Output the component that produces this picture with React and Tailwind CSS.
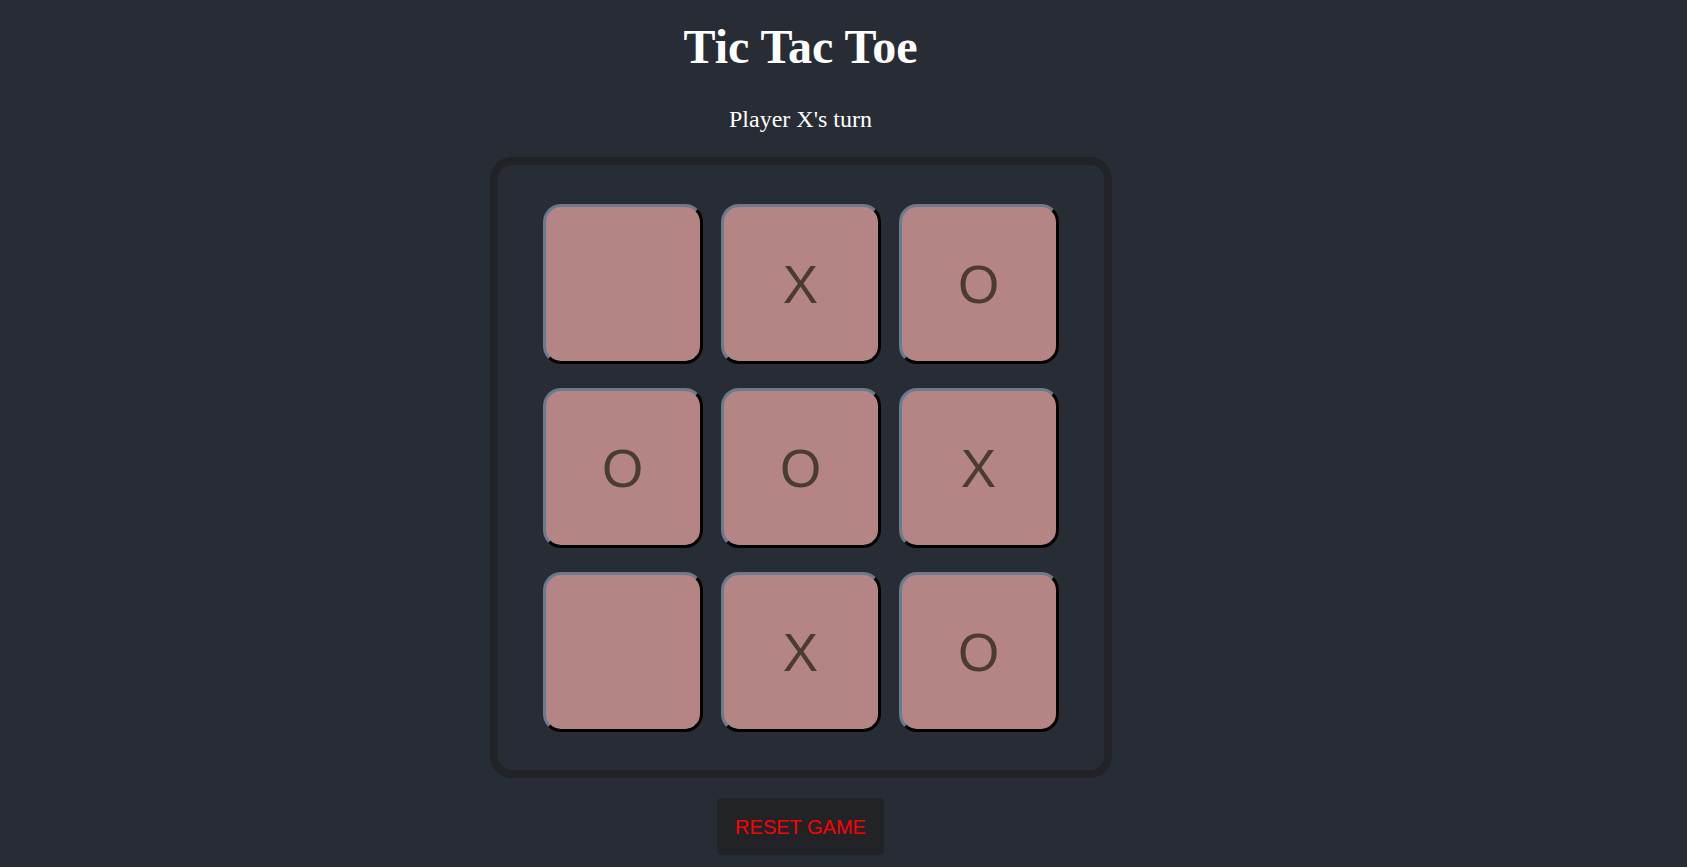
import { useState } from "react";

const START = [null, "X", "O", "O", "O", "X", null, "X", "O"];

function Cell({ value, onClick }) {
  return (
    <button
      onClick={onClick}
      className="flex h-[160px] w-[160px] items-center justify-center rounded-[18px] border-[3px] border-t-[#6b7b8c] border-l-[#6b7b8c] border-r-black border-b-black bg-[#b58585] font-['Liberation_Sans',Arial,sans-serif] text-[53px] leading-none text-[#4a3c31]"
    >
      {value}
    </button>
  );
}

export default function App() {
  const [squares, setSquares] = useState(START);
  const [xNext, setXNext] = useState(true);

  const play = (i) => {
    if (squares[i]) return;
    const next = squares.slice();
    next[i] = xNext ? "X" : "O";
    setSquares(next);
    setXNext(!xNext);
  };

  const reset = () => {
    setSquares(Array(9).fill(null));
    setXNext(true);
  };

  return (
    <div className="min-h-screen bg-[#282c34] pr-[86px] font-['Liberation_Serif','Times_New_Roman',serif] text-white">
      <div className="flex flex-col items-center pt-[19px]">
        <h1 className="text-[48px] font-bold leading-[55px]">Tic Tac Toe</h1>
        <p className="mt-[31px] text-[24px] leading-[28px]">
          Player {xNext ? "X" : "O"}'s turn
        </p>
        <div className="mt-[24px] rounded-[22px] border-8 border-[#212327] px-[45px] pt-[39px] pb-[38px]">
          <div className="grid grid-cols-3 gap-x-[18px] gap-y-[24px]">
            {squares.map((v, i) => (
              <Cell key={i} value={v} onClick={() => play(i)} />
            ))}
          </div>
        </div>
        <button
          onClick={reset}
          className="mt-[20px] h-[57px] w-[167px] rounded-[5px] bg-[#212327] font-['Liberation_Sans',Arial,sans-serif] text-[20px] text-[#ff0000]"
        >
          RESET GAME
        </button>
      </div>
    </div>
  );
}
